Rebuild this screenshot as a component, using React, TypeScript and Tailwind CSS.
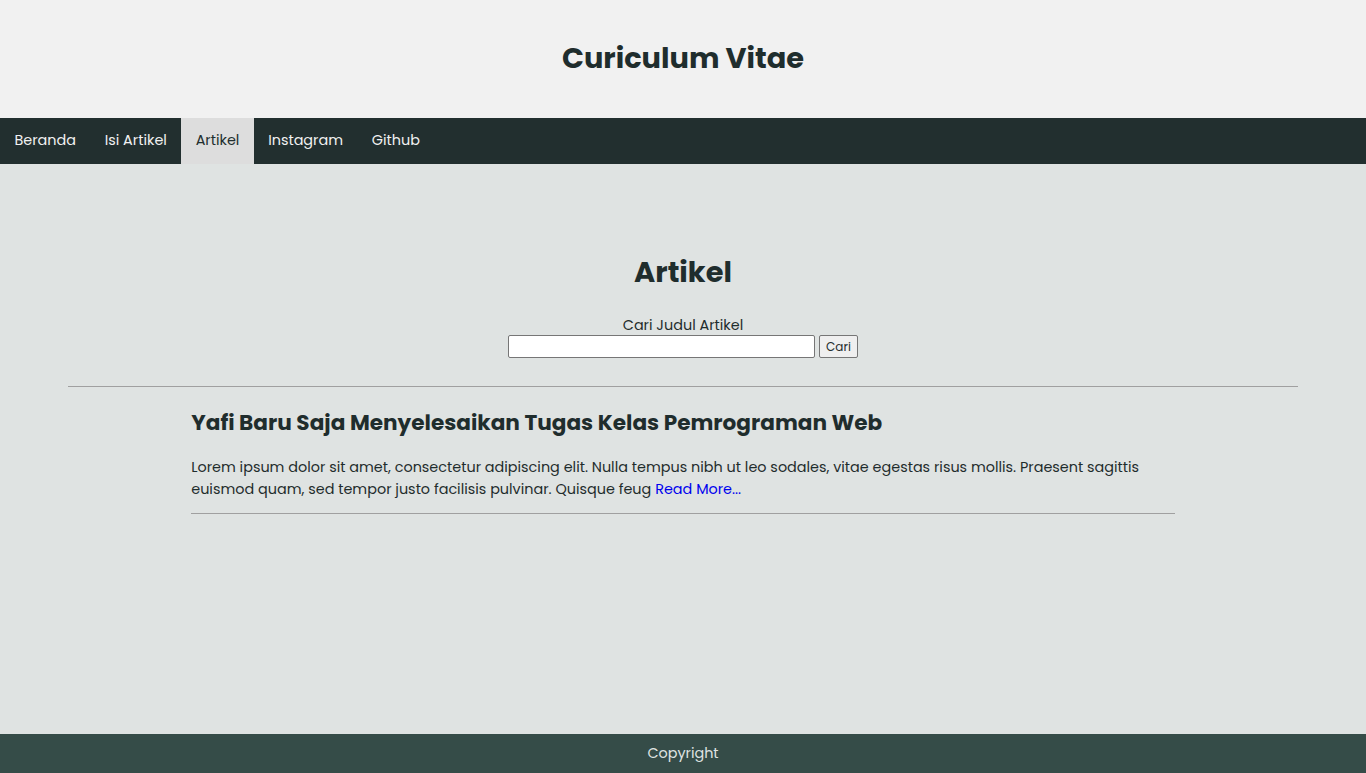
export default function App() {
  const menu = ['Beranda', 'Isi Artikel', 'Artikel', 'Instagram', 'Github']

  return (
    <div className="min-h-screen flex flex-col bg-[#dfe3e2] text-[#1f2d2d] font-['Poppins','DejaVu_Sans',sans-serif]">
      <header className="bg-[#f1f1f1] h-[118px] flex items-center justify-center">
        <h1 className="text-[28.8px] font-bold">Curiculum Vitae</h1>
      </header>

      <nav className="bg-[#222f2f] h-[46px] flex">
        {menu.map((item) => (
          <a
            key={item}
            href="#"
            className={
              item === 'Artikel'
                ? 'px-[14.4px] flex items-center text-[14.4px] bg-[#dddddd] text-[#222f2f]'
                : 'px-[14.4px] flex items-center text-[14.4px] text-[#f1f1f1]'
            }
          >
            {item}
          </a>
        ))}
      </nav>

      <main className="flex-1 pt-[88px]">
        <h2 className="text-center text-[28.8px] font-bold leading-[40px]">Artikel</h2>

        <form className="mt-[23px] flex flex-col items-center text-[14.4px]">
          <label className="leading-[20px]">Cari Judul Artikel</label>
          <div className="flex items-center gap-[4px]">
            <input type="text" className="w-[307px] h-[23px] bg-white border border-[#767676] rounded-[2px]" />
            <button type="button" className="h-[23px] px-[6px] text-[12px] bg-[#efefef] border border-[#767676] rounded-[2px]">
              Cari
            </button>
          </div>
        </form>

        <hr className="mx-auto mt-[28px] w-[90%] border-t border-[#a0a0a0]" />

        <article className="mx-auto w-[72%] pt-[21px]">
          <h3 className="text-[21.6px] font-bold leading-[30px]">
            Yafi Baru Saja Menyelesaikan Tugas Kelas Pemrograman Web
          </h3>
          <p className="mt-[19px] text-[14.4px] leading-[21.6px]">
            Lorem ipsum dolor sit amet, consectetur adipiscing elit. Nulla tempus nibh ut leo sodales, vitae egestas risus mollis. Praesent sagittis euismod quam, sed tempor justo facilisis pulvinar. Quisque feug{' '}
            <a href="#" className="text-[#0000ee]">Read More...</a>
          </p>
          <hr className="mt-[13px] border-t border-[#a0a0a0]" />
        </article>
      </main>

      <footer className="bg-[#354c48] h-[39px] flex items-center justify-center text-[14.4px] text-[#dfe3e2]">
        Copyright
      </footer>
    </div>
  )
}
